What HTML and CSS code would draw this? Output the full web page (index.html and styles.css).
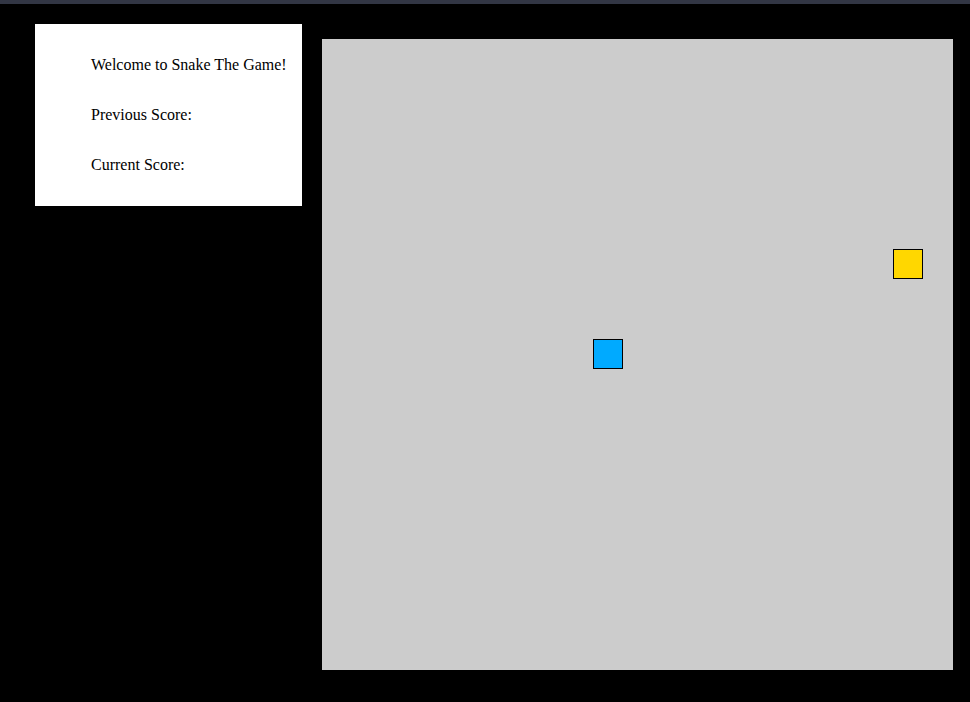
FILE: index.html
```html
<!DOCTYPE html>
<html>
<head>
<meta charset="utf-8">
<title>Snake The Game</title>
<link rel="stylesheet" href="styles.css">
</head>
<body>
<div class="topbar"></div>
<div class="main">
  <div class="panel">
    <div class="line">Welcome to Snake The Game!</div>
    <div class="line">Previous Score:</div>
    <div class="line">Current Score:</div>
  </div>
  <div class="board">
    <div class="cell snake" style="left:271px; top:300px"></div>
    <div class="cell food" style="left:571px; top:210px"></div>
  </div>
</div>
</body>
</html>
```
FILE: styles.css
```css
html, body {
  margin: 0;
  padding: 0;
  background: #000;
  height: 100%;
  overflow: hidden;
}
.topbar {
  height: 4px;
  background: #323644;
}
.main {
  display: flex;
  align-items: flex-start;
  gap: 20px;
  padding: 20px 0 0 35px;
}
.panel {
  box-sizing: border-box;
  width: 267px;
  height: 182px;
  background: #fff;
  padding: 32px 0 0 56px;
  display: flex;
  flex-direction: column;
  gap: 32px;
  font-family: "Liberation Serif", "Times New Roman", serif;
  font-size: 16px;
  color: #000;
}
.line {
  line-height: 18px;
  white-space: nowrap;
}
.board {
  position: relative;
  margin-top: 15px;
  width: 631px;
  height: 631px;
  background: #cccccc;
}
.cell {
  position: absolute;
  box-sizing: border-box;
  width: 30px;
  height: 30px;
  border: 1px solid #000;
}
.snake { background: #00aaff; }
.food { background: #ffd700; }
```
